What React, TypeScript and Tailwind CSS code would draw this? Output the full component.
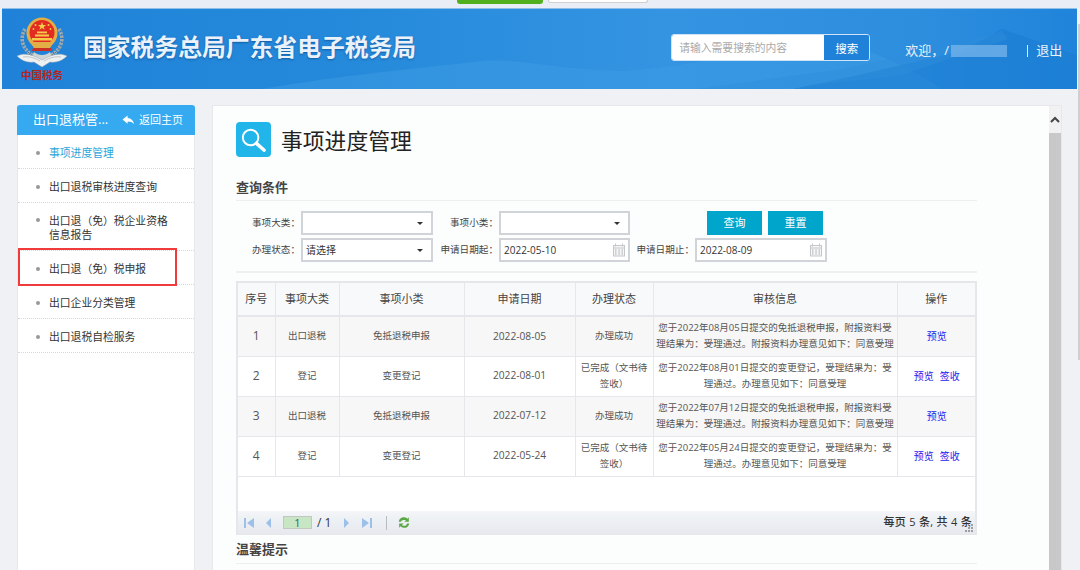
import React from "react";

const sideItems: { t: React.ReactNode; h: string; active?: boolean; top?: boolean; mark?: boolean }[] = [
  { t: "事项进度管理", h: "h-[34px]", active: true },
  { t: "出口退税审核进度查询", h: "h-[34px]" },
  { t: <>出口退（免）税企业资格<br />信息报告</>, h: "h-[48px]", top: true },
  { t: "出口退（免）税申报", h: "h-[34px]", mark: true },
  { t: "出口企业分类管理", h: "h-[34px]" },
  { t: "出口退税自检服务", h: "h-[34px]" },
];

const rows = [
  ["1", "出口退税", "免抵退税申报", "2022-08-05", "办理成功", "您于2022年08月05日提交的免抵退税申报，附报资料受理结果为：受理通过。附报资料办理意见如下：同意受理", false],
  ["2", "登记", "变更登记", "2022-08-01", "已完成（文书待签收）", "您于2022年08月01日提交的变更登记，受理结果为：受理通过。办理意见如下：同意受理", true],
  ["3", "出口退税", "免抵退税申报", "2022-07-12", "办理成功", "您于2022年07月12日提交的免抵退税申报，附报资料受理结果为：受理通过。附报资料办理意见如下：同意受理", false],
  ["4", "登记", "变更登记", "2022-05-24", "已完成（文书待签收）", "您于2022年05月24日提交的变更登记，受理结果为：受理通过。办理意见如下：同意受理", true],
] as const;

function Emblem() {
  return (
    <svg viewBox="0 0 50 50" className="w-[50px] h-[50px]">
      <g fill="none" stroke="#a3abad" strokeWidth="3.500" strokeDasharray="2.500 1">
        <path d="M8 12 C2 22 6 33 16 38" />
        <path d="M42 12 C48 22 44 33 34 38" />
      </g>
      <g fill="none" stroke="#5f696c" strokeWidth="0.8" strokeDasharray="1.500 2.500">
        <path d="M7 13 C2 22 6 33 15 38" />
        <path d="M43 13 C48 22 44 33 35 38" />
      </g>
      <circle cx="25" cy="16" r="15.500" fill="#e2ae45" />
      <circle cx="25" cy="15.500" r="12.500" fill="#e22c22" />
      <path d="M25 5l1.100 2.900 3 .1-2.400 1.900.9 2.900-2.600-1.700-2.600 1.700.9-2.900-2.400-1.900 3-.1z" fill="#f5cb4a" />
      <g fill="#f5cb4a">
        <circle cx="18.500" cy="8" r="1" />
        <circle cx="31.500" cy="8" r="1" />
        <circle cx="16.500" cy="12" r="0.900" />
        <circle cx="33.500" cy="12" r="0.900" />
        <rect x="20" y="14.500" width="10" height="1.800" />
        <rect x="18" y="17.500" width="14" height="2" />
        <rect x="15" y="21" width="20" height="2.500" />
      </g>
      <path d="M13 25h24l-4 6H17z" fill="#e2ae45" />
      <path d="M16 31h18l1 3H15z" fill="#c93023" />
      <path d="M17 35 C21 39 29 39 33 35 L35 40 C29 44 21 44 15 40z" fill="#cfd4d6" />
      <path d="M0 39 C8 35 16 38 25 43 C34 38 42 35 50 39 C45 44 39 46 33 45 L25 50 L17 45 C11 46 5 44 0 39z" fill="#eef1f2" stroke="#9ea7aa" strokeWidth="0.500" />
      <path d="M6 40 C12 39 18 41 23 44 M44 40 C38 39 32 41 27 44" fill="none" stroke="#a9b1b4" strokeWidth="0.700" />
    </svg>
  );
}

function Wall() {
  return (
    <svg viewBox="0 0 1075 80" preserveAspectRatio="none" className="absolute inset-0 w-full h-full">
      <defs>
        <linearGradient id="hdr" x1="0" x2="1" y1="0" y2="0">
          <stop offset="0" stopColor="#1f82d8" />
          <stop offset="0.3" stopColor="#2489da" />
          <stop offset="0.62" stopColor="#3494e2" />
          <stop offset="0.85" stopColor="#2e8ede" />
          <stop offset="1" stopColor="#1f84da" />
        </linearGradient>
      </defs>
      <rect width="1075" height="80" fill="url(#hdr)" />
      <path d="M260 80 C340 66 410 60 480 52 C510 48 550 60 620 62 C700 58 770 34 830 30 C880 44 920 66 940 80z" fill="#3d9be4" opacity="0.5" />
      <path d="M790 80 C850 68 900 56 960 42 L1000 20 L1075 46 L1075 80z" fill="#1a7bd2" opacity="0.55" />
      <path d="M695 80 L840 60 L960 34 L1000 22 L1006 30 L900 66 L780 80z" fill="#2f8fdc" opacity="0.45" />
    </svg>
  );
}

function Calendar() {
  return (
    <svg viewBox="0 0 14 14" className="w-[14px] h-[14px] shrink-0" fill="none" stroke="#c4c7ca" strokeWidth="1">
      <rect x="1.500" y="2.500" width="11" height="10.500" fill="#f6f6f6" />
      <path d="M3.500 0.500v3M10.500 0.500v3M1.500 5h11" />
      <path d="M3 7h1.500M6.300 7h1.500M9.500 7h1.500M3 9h1.500M6.300 9h1.500M9.500 9h1.500M3 11h1.500M6.300 11h1.500M9.500 11h1.500" stroke="#a8acaf" />
    </svg>
  );
}

function Caret() {
  return <span className="w-0 h-0 border-x-[3px] border-x-transparent border-t-[3px] border-t-[#333] shrink-0" />;
}

function Field({ label, labelW, boxW, cal, value }: { label: string; labelW: string; boxW: string; cal?: boolean; value?: string }) {
  return (
    <div className="flex items-center">
      <span className={"text-[9.600px] text-[#444] text-right whitespace-nowrap " + labelW}>{label}：</span>
      <div className={"h-[24px] border-2 border-[#d0d3d8] bg-white flex items-center justify-between pl-[3px] pr-[2px] text-[10px] text-[#333] ml-[1px] " + boxW}>
        <span>{value}</span>
        {cal ? <Calendar /> : <span className="mr-[6px] flex"><Caret /></span>}
      </div>
    </div>
  );
}

function Pager({ d }: { d: string }) {
  return (
    <svg viewBox="0 0 10 10" className="w-[10px] h-[10px] block" fill="#9cc0ea">
      <path d={d} />
    </svg>
  );
}

export default function App() {
  return (
    <div className="relative w-[1080px] h-[570px] overflow-hidden bg-[#f0f1f5] flex flex-col font-['Open_Sans','Noto_Sans_CJK_SC',sans-serif] text-[#333]">
      <div className="h-[8px] bg-[#e9edf5] flex justify-start pl-[457px] gap-[5px] shrink-0">
        <div className="w-[86px] h-[4px] bg-[#52b01f] rounded-b-[3px]" />
        <div className="w-[100px] h-[3px] bg-white border border-t-0 border-[#cfcfcf] rounded-b-[3px]" />
      </div>
      <header className="relative h-[81px] ml-[2px] mr-[3px] border-t border-[#8fbfe8] shrink-0 flex items-center pl-[15px]">
        <Wall />
        <div className="relative flex flex-col items-center w-[50px] shrink-0">
          <Emblem />
          <span className="text-[10.500px] leading-[12px] mt-[2px] font-bold text-[#b3261e] whitespace-nowrap">中国税务</span>
        </div>
        <h1 className="relative ml-[16px] -mt-[3px] text-[23.800px] font-bold text-[#e9f2fb] [text-shadow:0_1px_2px_rgba(0,50,110,0.5)] whitespace-nowrap">国家税务总局广东省电子税务局</h1>
        <div className="relative ml-[255px] -mt-[3px] flex h-[27px] w-[199px] rounded-[3px] overflow-hidden border border-[#cfe3f6]">
          <div className="flex-1 bg-white pl-[7px] pt-[2px] flex items-center text-[10.800px] text-[#aaa] whitespace-nowrap">请输入需要搜索的内容</div>
          <div className="w-[45px] bg-[#1f82d8] pt-[2px] flex items-center justify-center text-[11.500px] text-white">搜索</div>
        </div>
        <div className="relative ml-[35px] mt-[3px] flex items-center text-[13px] text-[#eaf3fc] whitespace-nowrap">
          <span className="w-[46px]">欢迎，/</span>
          <span className="w-[56px] h-[12px] bg-[#7db8ec] opacity-70" />
          <span className="w-[1px] h-[12px] bg-[#dcebf9] ml-[20px]" />
          <span className="ml-[8px]">退出</span>
        </div>
      </header>

      <div className="flex-1 flex pl-[17px] pt-[16px] min-h-0">
        <aside className="w-[178px] shrink-0 bg-white border-x border-[#e6e8ec]">
          <div className="h-[30px] bg-[#35aaf0] rounded-t-[3px] -mx-[1px] flex items-center text-white pl-[16px]">
            <span className="text-[13px] w-[89px] whitespace-nowrap">出口退税管...</span>
            <svg viewBox="0 0 14 12" className="w-[13px] h-[11px]" fill="#fff">
              <path d="M6 0.500L0.500 5l5.500 4.500V7c3.500 0 5.500 0.800 7 3C12.500 6.500 10 3.500 6 3.300z" />
            </svg>
            <span className="text-[11px] ml-[4px] whitespace-nowrap">返回主页</span>
          </div>
          {sideItems.map((it, i) => (
            <div key={i} className={"relative flex pl-[18px] pr-[8px] border-b border-dotted border-[#d8d8d8] text-[10.800px] leading-[14px] " + it.h + (it.top ? " items-start pt-[11px]" : " items-center pt-[2px]")}>
              <span className={"w-[4px] h-[4px] rounded-full bg-[#999] shrink-0 mr-[9px] " + (it.top ? "mt-[4px]" : "")} />
              <span className={it.active ? "text-[#2aa5d8]" : "text-[#333]"}>{it.t}</span>
              {it.mark && <span className="absolute left-0 -top-[3px] w-[159px] h-[38px] border-2 border-[#ef3b3b]" />}
            </div>
          ))}
        </aside>

        <main className="relative ml-[17px] w-[850px] h-[480px] overflow-hidden bg-[#fcfdfd] border border-[#e6e8ec] flex">
          <div className="w-[836px] shrink-0 pl-[23px] pr-[72px] pt-[16px]">
            <div className="flex items-center h-[35px]">
              <div className="w-[35px] h-[35px] rounded-[4px] bg-[#22b5ea] flex items-center justify-center shrink-0">
                <svg viewBox="0 0 36 36" className="w-[35px] h-[35px]" fill="none" stroke="#fff">
                  <circle cx="15" cy="16" r="8" strokeWidth="2" />
                  <path d="M21 22l8 7" strokeWidth="3.500" strokeLinecap="round" />
                </svg>
              </div>
              <h2 className="ml-[10px] mt-[3px] text-[21.800px] text-[#222] whitespace-nowrap">事项进度管理</h2>
            </div>
            <div className="mt-[20px] h-[24px] border-b border-[#eceef0] text-[13px] font-bold text-[#444] leading-[20px]">查询条件</div>

            <div className="mt-[10px] flex flex-col gap-[3px] h-[51px]">
              <div className="flex">
                <Field label="事项大类" labelW="w-[64px]" boxW="w-[132px]" />
                <Field label="事项小类" labelW="w-[65px]" boxW="w-[131px]" />
                <div className="ml-[77px] flex gap-[6px]">
                  <div className="w-[55px] h-[24px] bg-[#00a5cb] text-white text-[11px] flex items-center justify-center">查询</div>
                  <div className="w-[55px] h-[24px] bg-[#00a5cb] text-white text-[11px] flex items-center justify-center">重置</div>
                </div>
              </div>
              <div className="flex">
                <Field label="办理状态" labelW="w-[64px]" boxW="w-[132px]" value="请选择" />
                <Field label="申请日期起" labelW="w-[65px]" boxW="w-[131px]" value="2022-05-10" cal />
                <Field label="申请日期止" labelW="w-[64px]" boxW="w-[132px]" value="2022-08-09" cal />
              </div>
            </div>
            <div className="mt-[9px] h-[2px] bg-[#eef0f2]" />

            <div className="mt-[8px] h-[254px] border-2 border-[#e6e7ea] border-b-[1px] flex flex-col bg-white">
              <table className="w-full table-fixed border-collapse text-center text-[9.500px] text-[#555]">
                <colgroup>
                  <col className="w-[37px]" />
                  <col className="w-[64px]" />
                  <col className="w-[125px]" />
                  <col className="w-[111px]" />
                  <col className="w-[78px]" />
                  <col className="w-[244px]" />
                  <col className="w-[78px]" />
                </colgroup>
                <thead>
                  <tr className="h-[33px] bg-[#f8f9fb] border-b-2 border-[#e6e7ea] text-[11px] text-[#444]">
                    {["序号", "事项大类", "事项小类", "申请日期", "办理状态", "审核信息", "操作"].map((h) => (
                      <th key={h} className="font-normal border-r border-[#e6e7ea] last:border-r-0 pt-[1px]">{h}</th>
                    ))}
                  </tr>
                </thead>
                <tbody>
                  {rows.map((r, i) => (
                    <tr key={r[0]} className={"h-[40px] border-b border-[#e6e7ea] " + (i % 2 === 0 ? "bg-[#f7f7f7]" : "bg-white")}>
                      <td className="border-r border-[#e6e7ea] text-[12px]">{r[0]}</td>
                      <td className="border-r border-[#e6e7ea]">{r[1]}</td>
                      <td className="border-r border-[#e6e7ea]">{r[2]}</td>
                      <td className="border-r border-[#e6e7ea] text-[10.200px]">{r[3]}</td>
                      <td className="border-r border-[#e6e7ea] leading-[16px] px-[4px]">{r[4]}</td>
                      <td className="border-r border-[#e6e7ea] leading-[16px] px-[2px]">{r[5]}</td>
                      <td className="text-[#2222ee] text-[10px] pl-[1px]">
                        <span>预览</span>
                        {r[6] && <span className="ml-[6px]">签收</span>}
                      </td>
                    </tr>
                  ))}
                </tbody>
              </table>
              <div className="flex-1" />
              <div className="relative h-[23px] bg-gradient-to-b from-[#f3f5f8] to-[#e6e9ee] flex items-center pl-[6px] pr-[3px] text-[11px] text-[#333]">
                <Pager d="M0 0h2v10H0zM10 0v10L3 5z" />
                <span className="ml-[9px]"><Pager d="M8 0v10L3 5z" /></span>
                <div className="ml-[10px] w-[29px] h-[13px] bg-[#c8e6c4] border border-[#c0c8c0] text-center text-[11px] leading-[12px] text-[#1a6a6a]">1</div>
                <span className="ml-[5px] text-[12px] whitespace-nowrap">/ 1</span>
                <span className="ml-[11px]"><Pager d="M2 0v10l5-5z" /></span>
                <span className="ml-[10px]"><Pager d="M0 0v10l7-5zM8 0h2v10H8z" /></span>
                <span className="ml-[14px] w-[1px] h-[14px] bg-[#b8bcc2]" />
                <svg viewBox="0 0 16 14" className="ml-[10px] w-[14px] h-[13px]" fill="#5aa845">
                  <path d="M2 6C2.500 2.500 5.500 0.500 8.500 1c1.500 0.200 2.500 1 3.300 1.800L13.500 1v5H8.500l1.800-1.800C9.500 4.400 8.500 4 7.500 4.200 6 4.400 5 5 4.500 6z" />
                  <path d="M14 8c-0.500 3.500-3.500 5.500-6.500 5-1.500-0.200-2.500-1-3.300-1.800L2.500 13V8h5L5.700 9.800c0.800 0.800 1.800 1.200 2.800 1C10 10.600 11 10 11.500 8z" />
                </svg>
                <span className="ml-auto whitespace-nowrap text-[11px] font-medium tracking-[0.3px]">每页 5 条, 共 4 条</span>
                <svg viewBox="0 0 9 9" className="absolute right-[1px] bottom-[1px] w-[9px] h-[9px]" fill="#9a9ea3">
                  <rect x="6" y="0" width="2" height="2" />
                  <rect x="3" y="3" width="2" height="2" />
                  <rect x="6" y="3" width="2" height="2" />
                  <rect x="0" y="6" width="2" height="2" />
                  <rect x="3" y="6" width="2" height="2" />
                  <rect x="6" y="6" width="2" height="2" />
                </svg>
              </div>
            </div>
            <div className="h-[29px] border-b border-[#eceef0] text-[13px] font-bold text-[#444] leading-[28px]">温馨提示</div>
          </div>
          <div className="w-[12px] shrink-0 flex flex-col">
            <div className="h-[27px] bg-[#f1f1f1] flex items-center justify-center">
              <svg viewBox="0 0 10 7" className="w-[10px] h-[7px]" fill="none" stroke="#444" strokeWidth="2"><path d="M1 6l4-4 4 4" /></svg>
            </div>
            <div className="flex-1 bg-[#c8c8c8]" />
          </div>
        </main>
      </div>
      <div className="absolute right-0 top-[24px] w-[2px] h-[336px] bg-[#cfcfcf]" />
    </div>
  );
}
